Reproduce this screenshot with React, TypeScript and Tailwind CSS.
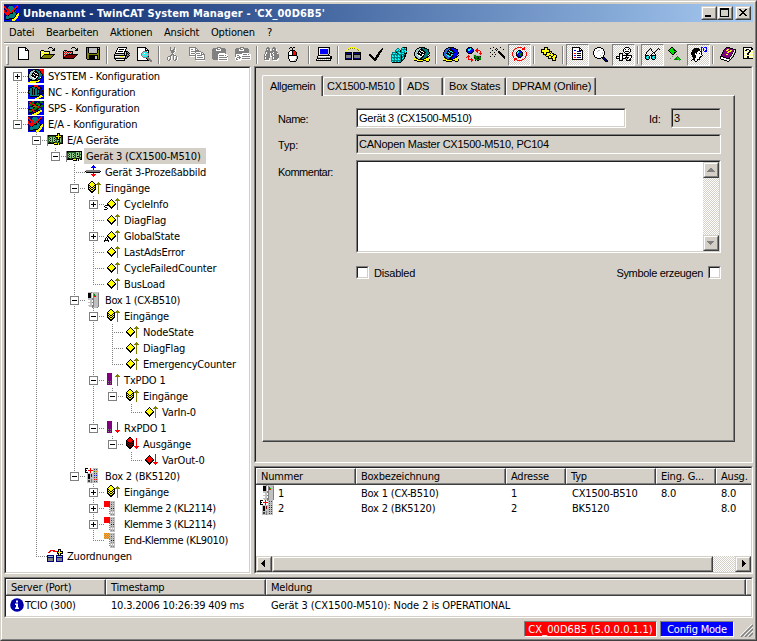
import React from 'react';

const COLORS: Record<string, string> = {
    k: '#000000', w: '#ffffff', g: '#808080', s: '#c0c0c0', y: '#ffff00', o: '#808000',
    r: '#ff0000', m: '#800000', b: '#0000ff', n: '#000080', c: '#00ffff', t: '#008080',
    l: '#00e000', e: '#008000', p: '#800080', d: '#404040', a: '#9ac8c8', f: '#f08000',
    h: '#90c890', i: '#206020', u: '#d8b060', v: '#3060d0', q: '#ffff99',
};

const page = ['..kkkkkkkk', '..kwwwwwwkk', '..kwwwwwwkwk', '..kwwwwwwkkkk', ...Array(8).fill('..kwwwwwwwwwk'), '..kkkkkkkkkkk'];

const folder = [
    '..........kkk', '.........k...k.k', '..............kk', '..kkk........kkk', '.kqyqkkkkkk', '.kyqyqyqyqk',
    '.kqyqyqyqyk', '.kyqykkkkkkkkkkk', '.kqykoooooooook', '.kykoooooooook', '.kkoooooooook', '.kkkkkkkkkkk',
];

const single = ['', '', '', '.......k', '......kyk', '.....kyyyk', '....kyyyyyk', '...kyyyyyyyk', '...kkyyyyykk', '....kkyyykk', '.....kkykk', '......kkk', '.......k'];
const stack = ['', '......kk', '.....kyyk', '....kyyyyk', '...kyyyyyyk', '...kkyyyykk', '...kykyykyk', '...kkykkykk', '...kykyykyk', '...kkykkykk', '....kkyykk', '.....kkkk', '......kk'];

const upArrow = [
    '', '', '.............o', '............ooo', '...........ooooo', '.............o', '.............o', '.............o',
    '.............o', '.............o', '.............o', '.............o', '.............o', '.............o',
];
const downArrow = [
    '', '', '.............r', '.............r', '.............r', '.............r', '.............r', '.............r',
    '.............r', '.............r', '...........rrrrr', '............rrr', '.............r',
];

const overlay = (a: string[], b: string[]) =>
    Array.from({ length: 16 }, (_, y) =>
        Array.from({ length: 16 }, (_, x) => {
            const top = b[y]?.[x] ?? '.';
            return top !== '.' ? top : a[y]?.[x] ?? '.';
        }).join('')
    );

const swap = (rows: string[], map: Record<string, string>) =>
    rows.map(row => row.replace(/./g, ch => map[ch] ?? ch));

const pdo = ['', '...ppppp', '...ppppp', '...ppppp', '...ppppp', '...ppppp', '...ppppp', '...ppppp', '...ppppp', '...pgpgp', '...ppppp', '...pgpgp', '...ppppp'];

const klemme = [
    '', 'rrrrrrsssss', 'rrrrrrsgsgs', 'rrrrrrsssss', 'rrrrrrsesfs', 'rrrrrrsssss', 'rrrrrrsgsgs', '.....gsssss',
    '......sbsbs', '.....gsssss', '......sgsgs', '.....gsssss', '......swsws', '.....gsssss', '......sgsgs', '......sssss',
];

const eaConfig = [
    'nnnnnnnnnbbbbrbb', 'rnnnnttttbbbrrbb', 'rrnnttttttbrrbbb', 'nrrnttttttrrkbbb', 'nnrrrttttrrkbbbb', 'rnnrrrttrrkbbbbb',
    'rnnrrrtrrrktbbbb', 'rrrrrrrrkttkbbbb', 'nrrrrrkkktttkbyb', 'nnrrrkttttttkyyb', 'nnnrkttttttkyyyb', 'nntttttttttkyybb',
    'nnttttttttkyyybb', 'nntttkkkkkyyybbb', 'nkkkkbbbyyyybbbb', 'bbbbbbbbyyybbbbb',
];

const gearHead = [
    '.....kkkkkk', '...kkaakttkkk', '..kaaakkkttttkk', '.kaaakwkkkttttk', '.kaakkkwwkktttk', 'kaaakwkkkwkktttk', 'kaakkkwkkkkttttk',
    'kaawkkkkwwktttk', 'kaaawwkkwkttttwk', '.kaaawwwkktttkk', '.kkaaaakktttkk', 'yykkaakkttkkyyy', 'yyyykkkkkkyyyyyk', 'kkkyyyyyykkkyyyk', '...kkkkkk...kkk',
];

const ICONS: Record<string, string[]> = {
    page,
    folder,
    folderRed: swap(folder, { y: 'r', q: 's', o: 'm' }),
    save: [
        '.kkkkkkkkkkkkkk', '.kokssssssssksk', '.koksssssssskkk', '.koksssssssskok', '.koksssssssskok', '.koksssssssskok', '.kookkkkkkkkook',
        '.kooooooooooook', '.kookkkkkkkkkok', '.kookkkkkksskok', '.kookkkkkksskok', '.kookkkkkksskok', '..kkkkkkkkkkkkk',
    ],
    print: [
        '....kkkkkkkkk', '...kwwwwwwwwk', '...kwkkkkkwk', '..kwwwwwwwwk', '..kwkkkkkwkkkk', '.kwwwwwwwwkskgk', '.kkkkkkkkkkskkgk', 'kssssssssskskgk',
        'kkkkkkkkkkkkkggk', 'kwwwwwyyywwkgkk', 'ksssssssssskgk', 'kkkkkkkkkkkkk', '.kwwwwwwwwk', '..kkkkkkkkk',
    ],
    preview: [
        'kkkkkkkkk', 'kwwwwwwwkk', 'kwwwwwwwkwk', 'kwwwwwwwkkkk', 'kwwwwwggggwk', 'kwwwwgacacgk', 'kwwwgacwcacg', 'kwwwgcwcacag', 'kwwwgacacacg',
        'kwwwwgacacgk', 'kwwwwwgggggg', 'kwwwwwwwwkggg', 'kwwwwwwwwwkggg', 'kkkkkkkkkkkkggg', '.............gg',
    ],
    cut: [
        '....g...g', '....g...gw', '....gw.ggw', '....gggg.w', '.....ggggw', '.....gggw', '......gw', '.....gggw', '....gg.ggg',
        '..gggw.gwwg', '.gwwgw.gw.gw', '.gw.gw.gw.gw', '.gwggw.gwggw', '..ggw...ggw',
    ],
    copy: [
        'ggggggg', 'gwwwwwgg', 'gwggwwgwg', 'gwwwwwgggg', 'gwgggggggggg', 'gwwwwwgwwwwwgg', 'gwggggwggggwgwg', 'gwwwwwgwwwwwgggg', 'gggggggwgggggwwg',
        '.wwwwwgwwwwwwwwg', '......gwggggggwg', '......gwwwwwwwwg', '......gggggggggg', '.......wwwwwwwww',
    ],
    paste: [
        '.....gggg', '.gggggwwggggg', 'ggggwgggwggggg', 'ggggwwwwwggggg', 'gggggggggggggg', 'gggggggggggggg', 'gggggggwwwwwwg', 'ggggggwwwwwwwww', 'ggggggwgggggwgww',
        'ggggggwwwwwwwwwg', 'ggggggwggggggggw', 'ggggggwwwwwwwwww', '.gggggwggggggggw', '......wwwwwwwwww',
    ],
    pasteLink: [
        '.....gggg', '.gggggwwggggg', 'ggggwgggwggggg', 'ggggwwwwwggggg', 'gggggggggggggg', 'gggggggggggggg', 'gggggggwwwwwww', 'gwwwwwwwggggwgww',
        'gwggwwwwwwwwwwww', 'gwwwgwwggggggggw', 'wwggggwwwwwwwwww', 'wgwwgwwggggggggw', 'wggwwwwwwwwwwwww', '.wwwww',
    ],
    find: [
        '...gg....gg', '..gggg..gggg', '..gwggw.gwggw', '..ggggw.ggggw', '.gggggggggggg', '.gwggggggwgggg', '.gwgggwgwggggw', 'gwggggwggwggggg',
        'gwggggwggwggggg', 'ggggggwwggggggg', 'gwgggg..gwggggg', 'gwgggw..gwggggw', 'gggggw..gggggww', '.wwwww...wwwww',
    ],
    mouse: [
        '...kk.kk', '..k..k', '.....k', '...kkkkk', '..kwwkrrk', '.kwwwkrrrk', '.kwwwkrrrk', '.kwwwkrrrk', '.kkkkkkkkk', '.kwwwwwwwsk', '.kwwwwwwwsk',
        '.kwwwwwwwsk', '..kwwwwwsk', '..kwwwwssk', '...kkkkkk',
    ],
    computer: [
        '..kkkkkkkkkkkk', '..kwwwwwwwwwsk', '..kwbbbbbbbbsk', '..kwbbbnbbbbsk', '..kwbbbnbbbbsk', '..kwbbbbbbbbsk', '..kwbbbbbbbbsk', '..kwssssssssk',
        '..kkkkkkkkkkkk', '.kwwwwwwwwwwwwkk', '.kssssssssgggskk', '.kkkkkkkkkkkkkkk', 'kwswswswswswswk', 'kkkkkkkkkkkkkkk',
    ],
    link: [
        '.....yyyyyy', '...yyoyoyoyyy', '..yo........oyy', '.yy..........oy', '', 'kkkkkkk.kkkkkkkk', 'knnnnnk.knnnnnnk', 'kkkkkkk.kkkkkkkk',
        'kgggggk.kggggggk', 'kgggggk.kggggggk', 'kgggggk.kggggggk', 'knnnnnk.knnnnnnk', 'kkkkkkk.kkkkkkkk',
    ],
    check: [
        '', '..............k', '.............kk', '............kk', '...........kkk', '..........kkk', '..........kk', '.kk......kkk', '.kkk....kkk',
        '..kkk...kkk', '...kkk.kkk', '....kkkkk', '.....kkkk', '......kk',
    ],
    cubes: [
        '...........tkkkk', '......tt..tcctck', '.....tcct.tttttk', '....tcctcktctcck', '....tttttktcctcc', '.ttttktcctttttck', '.tcctcktcctcckkk',
        'ttttttttttttttk', 'tcttcttcttkctkk', 'tcctcctcctkttkk', 'ttttttttttktck', 'tcttcttcttkctk', 'tcctcctcctktk', 'ttttttttttkk', 'tcttcttcttk', '.kkkkkkkkk',
    ],
    gearHead,
    blueHead: swap(gearHead, { t: 'b', a: 'v', w: 'c' }),
    transfer: [
        '..kkkk', '.kbbcbk....r', 'kbcccbbk..rr', 'kbccbbbk.rrrrr', 'kbbbbbnk..rr..r', '.kbbbnk....r..r', '..kkkk.......rrr', '.......ssss...r',
        '..r....seesssss', '.rrr...seeekeek', 'r.r....skeeekee', '..r..r..ekekkee', '..rrrrr..eeeeke', '.....rr..k.kk', '.....r',
    ],
    wand: [
        '....k......k', '.k.....k', '......k.k.....k', '...k...k', '.........kk', '.k...k...kkk', '..........kkk', '...k..k....kkk',
        '............kkk', '.k...k.......kkk', '..............kk', '...............k',
    ],
    refresh: [
        '.....rrrrr..r', '...rr.....rrr', '..r.......rrr', '.r....kkk', '.r...kcbbk...r', 'r...kccbbbk...r', 'r...kcbbeek...r', 'r...kbbeebk...r',
        'r...kbbbebk...r', '.r...knbbk...r', '.r....kkk....r', '..rrr.......r', '..rrr.....rr', '..r..rrrrr',
    ],
    pluses: [
        '...kkkk', '...kyyk', 'kkkkyykkk', 'kyyyyyyyk', 'kyyyyyyykkk', 'kkkyykkkkyk', '..kyykyyykykk', '..kkkkyyyyyykkk', '....kyyykkyykyyk',
        '.....kkkyykkyyyk', '.......kyykyyykk', '.......kkkkkyyk', '...........kyyk', '...........kkkk',
    ],
    list: [
        '..kkkkkkkk', '..kwwwwwwkk', '..kwwwwwwkwk', '..kwbbwwwkkkk', '..kwwwwnnnnwk', '..kwwwwwwwwwk', '..kwrrwkkkkwk', '..kwwwwwwwwwk',
        '..kwbbwkkkkwk', '..kwwwwwwwwwk', '..kwrrwnnnnwk', '..kwwwwwwwwwk', '..kkkkkkkkkkk',
    ],
    search: [
        '....kkkk', '..kkwwwwkk', '.kwwwwwwwwk', '.kwwwsswwwk', 'kwwwswwwwwwk', 'kwwwwwwwwswk', 'kwwwwwwwwswk', 'kwwwwwwwwwwk', '.kwwwwwswwk',
        '.kwwwwwwwwk', '..kkwwwwkkkk', '....kkkk.kbnk', '..........knnk', '...........knnk', '............kkk',
    ],
    valve: [
        '.........kkkk', '........kwwwwk', '.......kwkwwkwk', '.......kwwwwwwk', '.......kwkkkkwk', '........kwwwwk', '...kkkk..kkkk', '...k..k...kk',
        '...kwwkkkkkkkkkk', 'kkkkwwkwwwkwwwwk', 'kwwkwwkwwkkkkwwk', 'kkkkwwkkkk.kwwk', '...k..k...k..kk', '...kkkk...kkkkk',
    ],
    glasses: [
        '', '.....k.......k', '....k.k.....k.k', '...k..k....k', '..k....k..k', '.k......kk', '.k.....k.k', 'k.....k...k', 'kkkk.kkkkkk',
        'ktcck.ktcck', 'kcctk.kcctk', 'ktcck.ktcck', '.kkk...kkk',
    ],
    online: [
        '...kk', '..kllk', '.klllkk', 'klllllkk', '.kllllllk', '..klllkk', '...kllk', '....kk..g', '', '....g....e', '........ele', '..g....eelle', '......eeeelle', '...........g',
    ],
    headIq: [
        '..........bb.bbb', '...kkkkk..b.b..b', '..kkkkkkk.b.b..b', '.kkkkkkkk.b.b.bb', '.kkkkkkwwkb..bbb', 'kkkkkkwwwwk', 'kkkkwkwwkwk', 'kkkkwwwwwwk',
        '.kkkkwwwwwwk', '.kkkkwwwwkk', '..kkkwwwkk', '..kkwwwwk', '.kkkwwkkk', 'k..kwwk', '....kk',
    ],
    book: [
        '......kkkk', '.....kppppkkk', '....kppyyppppkkk', '...kppyyppyyppwk', '...kppppyyyppkwk', '..kppppyyppppwgk', '..kpppppppppkwk', '.kppppyyppppwgk',
        '.kpppppppppkwk', 'kkkpppppppkwgk', 'kwwkkkpppkwgk', 'kwwwwwkkkkwk', '.kkkwwwwwgk', '....kkkwwk', '.......kk',
    ],
    help: [
        'kkkkkkkkk', 'kwqwqwqwkk', 'kqwkkkqwkkkk', 'kwkkqwkkqwqk', 'kqwqwqkkwqwk', 'kwqwqkkqwqwk', 'kqwqkkqwqwqk', 'kwqwkkwqwqwk',
        'kqwqwqwqwqwk', 'kwqwkkqwqwqk', 'kqwqkkwqwqwk', 'kkkkkkkkkkkk',
    ],
    system: [
        '', 'nnnnnkkkkknrrrrr', 'nnnkkaakttkkrrrr', 'nnkaaakkktttkrrr', 'nkaaakwkkkttkrrr', 'nkaakkkwwkkttkrr', 'kaaakwkkkwktttkr', 'kaakkkwkkkktttkr',
        'kaawkkkkwwkttkbb', 'kaaawwkkwkttwkbb', 'nkaaawwwkkttkbbb', 'nnkkaaakktkkbbbb', 'nnnnkkkkkkyybbbb', 'bbyyyyyyyyykbbbb', 'yyyyyyyykbbbbbbb',
    ],
    nc: [
        '', 'bbbbbbrrrrbbbbbb', 'bbbbkkrrrrkkbbbb', 'nnkktttkkrrrkbbb', 'nkttkttktkrrkkbb', 'bkttktkttkknnkbb', 'kkttktkttktknnkb', 'ktttktkttktknnkk',
        'ktttktkttktknnnk', 'kkttktkttkkknnkk', 'bkttktkttktkkkbb', 'bktttttttttkyybb', 'bbkkkkkkkkkyyyyb', 'bbbbbbbbbyyyybbb', 'bbbbbbbyyyybbbbb',
    ],
    sps: [
        '', 'nnnnrrnnnnnneenn', 'nrrneenkkenneeen', 'nnrreekkeeennnbb', 'neeerrrkeeetkkbb', 'neeekkrrkkttkeeb', 'bnnkkoooorrkeeeb', 'bktttkkeerrkkbbb',
        'bktttkeeekkttkbb', 'kkkkreeekktttkbb', 'neerrrkknkkkyybb', 'neeekrrnnkyyyybb', 'nnkknnnkyyyybbbb', 'nnnnnkyyyyybbbbb', 'bbbbyyyyybbbbbbb',
    ],
    eaConfig,
    devices: [
        '', '..........kkk', '..........kyk', 'gkkkkkkkkkkykkkk', 'gkiiiiiikyyyyykk', 'giihhihhikkykkik', 'gihkhihkhikykhik', 'giihhihhiikkkhik',
        'gihkhihkhihhkhik', 'giihhihhiihkkhik', 'gikkiikkiiiiiiik', 'gkkkkkkyyykykkkk', 'g......kkkkyk', 'g',
    ],
    device: [
        '', '', '', 'gkkkkkkkkkkkkkkk', 'gkiiiiiiiihhhihk', 'giihhihhiihkhihk', 'gihkhihkhihkhiik', 'giihhihhiihhhihk', 'gihkhihkhihkkihk',
        'giihhihhiihhhiik', 'gikkiikkiikkkiik', 'gkkkkkkyyykykykk', 'g......kkkkyk', 'g',
    ],
    process: [
        '', '........b', '.......bbb', '......bbbbb', '........b', '........b', '.gggggggggggggg', 'kggggggggggggggk', '.kkkkkkkkkkkkkk', '........r', '......rrrrr', '.......rrr', '........r',
    ],
    inputs: overlay(stack, upArrow),
    outputs: overlay(swap(stack, { y: 'm' }).map((r, i) => (i < 6 ? r.replace(/m/g, 'r') : r)), downArrow),
    varIn: overlay(single, upArrow),
    varOut: overlay(swap(single, { y: 'r' }), downArrow),
    varInS: overlay(overlay(single, upArrow), ['', '', '', '', '', '', '', '', '', '.kkk', 'k', '.kk', '...k', 'kkk']),
    varInA: overlay(overlay(single, upArrow), ['', '', '', '', '', '', '', '', '', '..k', '.k.k', '.k.k', 'kkkkk', 'k...k']),
    box1: [
        '...sssgsssssss', '...kkkswgssssg', '...kkkswgesssg', '...kkkswgelssg', '...kkkswgrrssg', '...kkkswgssssg', '...ssssggssssg', '...ssssggssssg',
        '...wwsswgssssg', '...wwsswgssssg', '...ssssggssssg', '...wwsswgssssg', '...wwsswgssssg', '...ssssggssssg', '....sssggssssg', '.......gssssg',
    ],
    box2: [
        'kkk..r..sssss', 'k....r..sdsds', 'kk.rrrrrsssss', 'k....r..sesfs', 'kkk..r..sssss', '..sssssssdsds', '..skksmssssss', '..skksmssbsbs',
        '..skksmssssss', '..skkssssdsds', '..skkssssssss', '..ssssgssrsrs', '..sddsgssssss', '..sddsgssdsds', '..ssssgssssss',
    ],
    txPdo: overlay(pdo, upArrow),
    rxPdo: overlay(pdo, downArrow),
    klemme,
    endKlemme: klemme.map((row, y) => (y > 0 && y < 7 ? (y % 2 ? 'fufufu' : 'ufufuf') + row.slice(6) : row)),
    mapping: [
        '', '...........kkk', '...rrrrr...kyk', '..rr..rrrrkkykkk', '.rr.......kyyyyk', '..........kkykkk', '...........kyk', 'nnnnnnn..nnkkknn',
        'naaaaan..naaaaan', 'nnnnnnn..nnnnnnn', 'ngggggn..ngggggn', 'ngggggn..ngggggn', 'ngggggn..ngggggn', 'nnnnnnn..nnnnnnn',
    ],
};

const Icon = ({ name }: { name: string }) => (
    <svg width="16" height="16" viewBox="0 0 16 16" shapeRendering="crispEdges" className="block shrink-0">
        {ICONS[name].flatMap((row, y) =>
            (row.match(/(.)\1*/g) ?? []).reduce<{ x: number; out: React.ReactNode[] }>(
                (acc, run) => {
                    if (run[0] !== '.') {
                        acc.out.push(<rect key={`${acc.x}-${y}`} x={acc.x} y={y} width={run.length} height={1} fill={COLORS[run[0]]} />);
                    }
                    acc.x += run.length;
                    return acc;
                },
                { x: 0, out: [] }
            ).out
        )}
    </svg>
);

type Node = { level: number; icon: string; label: string; open?: '+' | '-'; tight?: boolean };

const NODES: Node[] = [
    { level: 0, icon: 'system', label: 'SYSTEM - Konfiguration', open: '+' },
    { level: 0, icon: 'nc', label: 'NC - Konfiguration' },
    { level: 0, icon: 'sps', label: 'SPS - Konfiguration' },
    { level: 0, icon: 'eaConfig', label: 'E/A - Konfiguration', open: '-' },
    { level: 1, icon: 'devices', label: 'E/A Geräte', open: '-' },
    { level: 2, icon: 'device', label: 'Gerät 3 (CX1500-M510)', open: '-' },
    { level: 3, icon: 'process', label: 'Gerät 3-Prozeßabbild' },
    { level: 3, icon: 'inputs', label: 'Eingänge', open: '-' },
    { level: 4, icon: 'varInS', label: 'CycleInfo', open: '+' },
    { level: 4, icon: 'varIn', label: 'DiagFlag' },
    { level: 4, icon: 'varInA', label: 'GlobalState', open: '+' },
    { level: 4, icon: 'varIn', label: 'LastAdsError' },
    { level: 4, icon: 'varIn', label: 'CycleFailedCounter' },
    { level: 4, icon: 'varIn', label: 'BusLoad' },
    { level: 3, icon: 'box1', label: 'Box 1 (CX-B510)', open: '-', tight: true },
    { level: 4, icon: 'inputs', label: 'Eingänge', open: '-' },
    { level: 5, icon: 'varIn', label: 'NodeState' },
    { level: 5, icon: 'varIn', label: 'DiagFlag' },
    { level: 5, icon: 'varIn', label: 'EmergencyCounter' },
    { level: 4, icon: 'txPdo', label: 'TxPDO 1', open: '-' },
    { level: 5, icon: 'inputs', label: 'Eingänge', open: '-' },
    { level: 6, icon: 'varIn', label: 'VarIn-0' },
    { level: 4, icon: 'rxPdo', label: 'RxPDO 1', open: '-' },
    { level: 5, icon: 'outputs', label: 'Ausgänge', open: '-' },
    { level: 6, icon: 'varOut', label: 'VarOut-0' },
    { level: 3, icon: 'box2', label: 'Box 2 (BK5120)', open: '-' },
    { level: 4, icon: 'inputs', label: 'Eingänge', open: '+' },
    { level: 4, icon: 'klemme', label: 'Klemme 2 (KL2114)', open: '+', tight: true },
    { level: 4, icon: 'klemme', label: 'Klemme 3 (KL2114)', open: '+', tight: true },
    { level: 4, icon: 'endKlemme', label: 'End-Klemme (KL9010)', tight: true },
    { level: 1, icon: 'mapping', label: 'Zuordnungen' },
];

// true when another node of the given level follows before its branch ends
const continues = (index: number, level: number) => {
    for (let i = index + 1; i < NODES.length; i++) {
        if (NODES[i].level < level) return false;
        if (NODES[i].level === level) return true;
    }
    return false;
};

const Guide = ({ up, down, branch, open }: { up?: boolean; down?: boolean; branch?: boolean; open?: '+' | '-' }) => (
    <svg width={branch ? 20 : 19} height="16" shapeRendering="crispEdges" className="block shrink-0" fill="none" stroke="#808080">
        {up && <path d="M9.5 0V8" strokeDasharray="1 1" />}
        {down && <path d="M9.5 8V16" strokeDasharray="1 1" />}
        {branch && <path d="M9 8.5H20" strokeDasharray="1 1" />}
        {open && <rect x="5.5" y="4.5" width="8" height="8" fill="#fff" />}
        {open && <path d="M7 8.5H12" stroke="#000" />}
        {open === '+' && <path d="M9.5 6V11" stroke="#000" />}
    </svg>
);

const TreeRow = ({ node, index }: { node: Node; index: number }) => (
    <div className="flex h-4 items-center">
        {Array.from({ length: node.level }, (_, l) => (
            <Guide key={l} up={continues(index, l)} down={continues(index, l)} />
        ))}
        <Guide up={index > 0} down={continues(index, node.level)} branch open={node.open} />
        <Icon name={node.icon} />
        <span
            className={`ml-[2px] h-4 whitespace-nowrap pl-[2px] pr-[5px] leading-[18px] ${index === 5 ? 'bg-[#d4d0c8]' : ''} ${
                node.tight ? 'tracking-[-0.38px]' : 'tracking-[-0.16px]'
            }`}
        >
            {node.label}
        </span>
    </div>
);

const Sunken = ({ className, inner, children }: { className?: string; inner?: string; children?: React.ReactNode }) => (
    <div className={`flex border border-b-white border-l-[#808080] border-r-white border-t-[#808080] ${className ?? ''}`}>
        <div className={`min-w-0 flex-1 overflow-hidden border border-b-[#d4d0c8] border-l-[#202020] border-r-[#d4d0c8] border-t-[#202020] ${inner ?? ''}`}>
            {children}
        </div>
    </div>
);

const Raised = ({ className, children }: { className?: string; children?: React.ReactNode }) => (
    <div className={`flex border border-b-[#404040] border-l-[#d4d0c8] border-r-[#404040] border-t-[#d4d0c8] ${className ?? ''}`}>
        <div className="flex min-w-0 flex-1 items-center justify-center border border-b-[#808080] border-l-white border-r-[#808080] border-t-white bg-[#d4d0c8]">
            {children}
        </div>
    </div>
);

const Arrow = ({ d, color }: { d: string; color: string }) => (
    <svg width="8" height="8" className="block shrink-0" shapeRendering="crispEdges">
        <path d={d} fill={color} />
    </svg>
);

const HeaderCell = ({ width, children }: { width: string; children?: React.ReactNode }) => (
    <div className={`flex h-[17px] shrink-0 items-center overflow-hidden whitespace-nowrap border-b border-r border-t border-b-[#404040] border-r-[#404040] border-t-white bg-[#d4d0c8] ${width}`}>
        <div className="flex h-full w-full items-center border-b border-l border-r border-b-[#808080] border-l-white border-r-[#808080] pl-[4px] pt-px">{children}</div>
    </div>
);

const TOOLBAR: { names: string[]; pressed?: string[] }[] = [
    { names: ['page', 'folder', 'folderRed', 'save'] },
    { names: ['print', 'preview'] },
    { names: ['cut', 'copy', 'paste', 'pasteLink'] },
    { names: ['find', 'mouse'] },
    { names: ['computer'] },
    { names: ['link', 'check', 'cubes', 'gearHead'] },
    { names: ['blueHead', 'transfer', 'wand', 'refresh'], pressed: ['refresh'] },
    { names: ['pluses'] },
    { names: ['list', 'search', 'valve'], pressed: ['list', 'valve'] },
    { names: ['glasses', 'online', 'headIq'], pressed: ['glasses', 'headIq'] },
    { names: ['book', 'help'] },
];

const Toolbar = () => (
    <div className="flex h-6 items-center overflow-hidden border-t border-[#808080]">
        <div className="flex h-full w-full shrink-0 items-center border-t border-white pl-[2px]">
            <div className="mr-[3px] h-[19px] w-[3px] shrink-0 border border-b-[#808080] border-l-white border-r-[#808080] border-t-white" />
            {TOOLBAR.map((group, g) => (
                <div key={g} className="flex shrink-0 items-center">
                    {g > 0 && (
                        <div className="flex w-[6px] justify-center">
                            <div className="h-[18px] w-[2px] border-l border-r border-l-[#808080] border-r-white" />
                        </div>
                    )}
                    {group.names.map(name => (
                        <div
                            key={name}
                            className={`flex h-[22px] w-[23px] items-center justify-center border ${
                                group.pressed?.includes(name)
                                    ? 'border-b-white border-l-[#808080] border-r-white border-t-[#808080] bg-[repeating-conic-gradient(#ffffff_0_25%,#d4d0c8_0_50%)] bg-[length:2px_2px]'
                                    : 'border-transparent'
                            }`}
                        >
                            <Icon name={name} />
                        </div>
                    ))}
                </div>
            ))}
        </div>
    </div>
);

const Tab = ({ width, selected, children }: { width: string; selected?: boolean; children: React.ReactNode }) => (
    <div className={`flex rounded-t-[2px] border-l border-r border-t border-l-white border-r-[#404040] border-t-white bg-[#d4d0c8] ${selected ? '-mb-px h-[21px]' : 'h-[18px]'} ${width}`}>
        <div className="flex flex-1 items-center whitespace-nowrap border-r border-[#808080] pl-[4px]">{children}</div>
    </div>
);

const DeviceForm = () => (
    <div className="pl-[6px] pr-[16px] pt-[7px] font-['Liberation_Sans',Arial,sans-serif] text-[11px]">
        <div className="flex h-5 items-end">
            <Tab width="w-[61px]" selected><span className="pl-[3px] tracking-[-0.35px]">Allgemein</span></Tab>
            <Tab width="w-[78px]"><span className="-ml-px tracking-[-0.3px]">CX1500-M510</span></Tab>
            <Tab width="ml-px w-[41px]">ADS</Tab>
            <Tab width="ml-px w-[62px]">Box States</Tab>
            <Tab width="w-[90px]"><span className="pl-px">DPRAM (Online)</span></Tab>
        </div>
        <div className="h-[347px] border-b border-l border-r border-t border-b-[#404040] border-l-white border-r-[#404040] border-t-white">
            <div className="h-full border-b border-r border-[#808080] pl-[15px] pr-[12px] pt-[12px]">
                <div className="flex h-5 items-center">
                    <span className="w-[78px] shrink-0 pt-[2px] tracking-[-0.45px]">Name:</span>
                    <Sunken className="h-5 w-[270px] shrink-0" inner="flex items-center bg-white pl-px tracking-[-0.25px]">Gerät 3 (CX1500-M510)</Sunken>
                    <span className="ml-[23px] w-[22px] shrink-0 pt-[2px]">Id:</span>
                    <Sunken className="h-5 w-[50px] shrink-0" inner="flex items-center pl-px">3</Sunken>
                </div>
                <div className="mt-[6px] flex h-5 items-center">
                    <span className="w-[78px] shrink-0 pt-[2px]">Typ:</span>
                    <Sunken className="h-5 w-[365px] shrink-0" inner="flex items-center pl-px tracking-[-0.25px]">CANopen Master CX1500-M510, PC104</Sunken>
                </div>
                <div className="mt-[6px] flex">
                    <span className="w-[78px] shrink-0 pt-[6px] tracking-[-0.5px]">Kommentar:</span>
                    <Sunken className="h-[93px] w-[365px] shrink-0" inner="flex justify-end bg-white">
                        <div className="flex w-4 flex-col justify-between bg-[repeating-conic-gradient(#ffffff_0_25%,#d4d0c8_0_50%)] bg-[length:2px_2px]">
                            <Raised className="h-4"><Arrow d="M4 2h1v1h1v1h1v1h1v1H0V5h1V4h1V3h1V2z" color="#808080" /></Raised>
                            <Raised className="h-4"><Arrow d="M0 2h7v1H6v1H5v1H4v1H3V5H2V4H1V3H0z" color="#808080" /></Raised>
                        </div>
                    </Sunken>
                </div>
                <div className="mt-[13px] flex h-[13px] items-center pl-[78px]">
                    <Sunken className="h-[13px] w-[13px]" inner="bg-white" />
                    <span className="ml-[5px] pt-px">Disabled</span>
                    <span className="ml-auto mr-[5px] pt-px tracking-[-0.32px]">Symbole erzeugen</span>
                    <Sunken className="h-[13px] w-[13px]" inner="bg-white" />
                </div>
            </div>
        </div>
    </div>
);

const BOXES = [
    { icon: 'box1', cells: ['1', 'Box 1 (CX-B510)', '1', 'CX1500-B510', '8.0', '8.0'] },
    { icon: 'box2', cells: ['2', 'Box 2 (BK5120)', '2', 'BK5120', '', '8.0'] },
];

const BoxTable = () => (
    <Sunken className="h-[108px]" inner="flex flex-col bg-white">
        <div className="flex">
            <HeaderCell width="w-[100px]">Nummer</HeaderCell>
            <HeaderCell width="w-[150px]">Boxbezeichnung</HeaderCell>
            <HeaderCell width="w-[60px]">Adresse</HeaderCell>
            <HeaderCell width="w-[90px]">Typ</HeaderCell>
            <HeaderCell width="w-[60px]">Eing. G...</HeaderCell>
            <HeaderCell width="w-[60px]">Ausg.</HeaderCell>
        </div>
        {BOXES.map(box => (
            <div key={box.icon} className="flex h-[15px] items-center whitespace-nowrap">
                <div className="flex w-[105px] shrink-0 items-center pl-1">
                    <Icon name={box.icon} />
                    <span className="pl-[2px] pt-px">{box.cells[0]}</span>
                </div>
                <span className="w-[150px] shrink-0 pt-px">{box.cells[1]}</span>
                <span className="w-[61px] shrink-0 pt-px">{box.cells[2]}</span>
                <span className="w-[89px] shrink-0 pt-px">{box.cells[3]}</span>
                <span className="w-[60px] shrink-0 pt-px">{box.cells[4]}</span>
                <span className="pt-px">{box.cells[5]}</span>
            </div>
        ))}
        <div className="mt-auto flex h-4 bg-[repeating-conic-gradient(#ffffff_0_25%,#d4d0c8_0_50%)] bg-[length:2px_2px]">
            <Raised className="w-4"><Arrow d="M5 0v7H4V6H3V5H2V4H1V3h1V2h1V1h1V0z" color="#000" /></Raised>
            <Raised className="w-[441px]" />
            <Raised className="ml-auto w-4"><Arrow d="M3 0v7h1V6h1V5h1V4h1V3H6V2H5V1H4V0z" color="#000" /></Raised>
        </div>
    </Sunken>
);

const TitleBar = () => (
    <div className="flex h-[18px] items-center bg-gradient-to-r from-[#0a246a] to-[#a6caf0] pr-[2px]">
        <Icon name="eaConfig" />
        <span className="ml-[3px] whitespace-nowrap text-[11px] font-bold tracking-[0.13px] text-white">Unbenannt - TwinCAT System Manager - 'CX_00D6B5'</span>
        <div className="ml-auto flex h-[14px]">
            <Raised className="w-4">
                <svg width="10" height="10" shapeRendering="crispEdges"><path d="M1 7h6v2H1z" /></svg>
            </Raised>
            <Raised className="w-4">
                <svg width="10" height="10" shapeRendering="crispEdges"><path d="M0 0h9v9H0zM1 2v6h7V2z" fillRule="evenodd" /></svg>
            </Raised>
            <Raised className="ml-[2px] w-4">
                <svg width="10" height="10" shapeRendering="crispEdges"><path d="M1 1h2v1h1v1h2V2h1V1h2v1H8v1H7v1H6v1h1v1h1v1h1v1H7V7H6V6H4v1H3v1H1V7h1V6h1V5h1V4H3V3H2V2H1z" /></svg>
            </Raised>
        </div>
    </div>
);

const App = () => (
    <div className="h-[641px] w-[757px] overflow-hidden border border-b-[#404040] border-l-[#d4d0c8] border-r-[#404040] border-t-[#d4d0c8] bg-[#d4d0c8] font-['DejaVu_Sans_Condensed','DejaVu_Sans',sans-serif] text-[11px] leading-[13px] tracking-[-0.2px] text-black">
        <div className="flex h-full flex-col border border-b-[#808080] border-l-white border-r-[#808080] border-t-white p-[2px]">
            <TitleBar />
            <div className="flex h-5 items-center whitespace-nowrap pl-[5px]">
                <span className="w-[37px]">Datei</span>
                <span className="w-[64px]">Bearbeiten</span>
                <span className="w-[54px]">Aktionen</span>
                <span className="w-[47px]">Ansicht</span>
                <span className="w-[56px]">Optionen</span>
                <span>?</span>
            </div>
            <Toolbar />
            <div className="flex h-[508px] gap-[3px]">
                <Sunken className="w-[247px]" inner="bg-white pl-[2px]">
                    {NODES.map((node, i) => <TreeRow key={i} node={node} index={i} />)}
                </Sunken>
                <div className="flex w-[499px] flex-col gap-[3px]">
                    <Sunken className="h-[397px]"><DeviceForm /></Sunken>
                    <BoxTable />
                </div>
            </div>
            <Sunken className="mt-[3px] h-[41px]" inner="bg-white">
                <div className="flex">
                    <HeaderCell width="w-[100px]">Server (Port)</HeaderCell>
                    <HeaderCell width="w-[160px]">Timestamp</HeaderCell>
                    <HeaderCell width="w-[480px]">Meldung</HeaderCell>
                    <HeaderCell width="w-[20px]" />
                </div>
                <div className="flex h-[18px] items-center whitespace-nowrap">
                    <div className="flex w-[105px] items-center pl-1">
                        <svg width="14" height="14" viewBox="0 0 14 14" className="mr-[1px] block">
                            <circle cx="7" cy="7" r="6.8" fill="#0000a8" />
                            <path d="M6 2.5h2v2H6zM5 5.5h3v4h1v1.5H5V9.500h1V7H5z" fill="#fff" />
                        </svg>
                        TCIO (300)
                    </div>
                    <span className="w-[160px]">10.3.2006 10:26:39 409 ms</span>
                    <span className="tracking-[-0.08px]">Gerät 3 (CX1500-M510): Node 2 is OPERATIONAL</span>
                </div>
            </Sunken>
            <div className="flex h-[19px] items-end justify-end whitespace-nowrap text-white">
                <div className="mr-[3px] flex h-4 w-[133px] items-center justify-center border border-b-white border-l-[#808080] border-r-white border-t-[#808080] bg-[#ff0000] tracking-[0.08px]">CX_00D6B5 (5.0.0.0.1.1)</div>
                <div className="mr-[6px] flex h-4 w-[74px] items-center justify-center border border-b-white border-l-[#808080] border-r-white border-t-[#808080] bg-[#0000ff]">Config Mode</div>
                <svg width="13" height="13" stroke="#808080" strokeWidth="1.5">
                    <path d="M1 13L13 1M5 13L13 5M9 13L13 9" />
                    <path d="M0 12L12 0M4 12L13 3M8 12L13 7" stroke="#fff" strokeWidth="0.8" />
                </svg>
            </div>
        </div>
    </div>
);

export default App;
